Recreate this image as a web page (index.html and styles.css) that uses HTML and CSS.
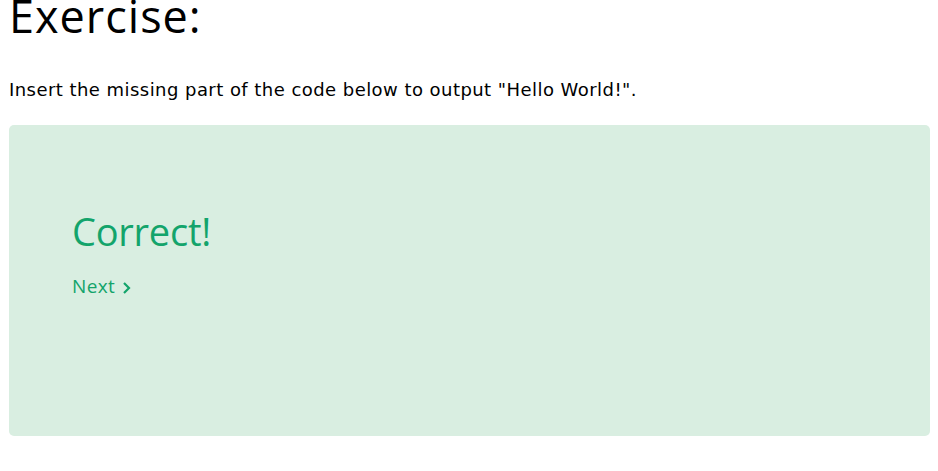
FILE: index.html
```html
<!DOCTYPE html>
<html lang="en">
<head>
<meta charset="utf-8">
<title>Exercise</title>
<link rel="stylesheet" href="styles.css">
</head>
<body>
<main class="page">
  <h2 class="title">Exercise:</h2>
  <p class="intro">Insert the missing part of the code below to output "Hello World!".</p>
  <section class="result">
    <h2 class="correct">Correct!</h2>
    <a class="next" href="#">Next<svg class="chev" width="9" height="12" viewBox="0 0 9 12" aria-hidden="true"><path d="M2 1 L7 6 L2 11" fill="none" stroke="currentColor" stroke-width="2.2"/></svg></a>
  </section>
</main>
</body>
</html>
```

FILE: styles.css
```css
html, body {
  margin: 0;
  padding: 0;
  background: #ffffff;
}
.page {
  padding: 0 8px 0 9px;
}
.title {
  margin: -4px 0 0 0;
  font-family: "Open Sans", "Noto Sans", sans-serif;
  font-weight: 400;
  font-size: 45px;
  line-height: 40px;
  height: 40px;
  color: #000;
  letter-spacing: 1px;
}
.intro {
  margin: 44px 0 0 0;
  font-family: "DejaVu Sans", Verdana, sans-serif;
  font-size: 18px;
  line-height: 20px;
  letter-spacing: 0.45px;
  color: #000;
}
.result {
  margin-top: 25px;
  height: 311px;
  box-sizing: border-box;
  background: #d9eee1;
  border-radius: 5px;
  padding: 83px 63px 0 63px;
  display: flex;
  flex-direction: column;
  align-items: flex-start;
}
.correct {
  margin: 0;
  font-family: "Open Sans", "Noto Sans", sans-serif;
  font-weight: 400;
  font-size: 38px;
  line-height: 46px;
  color: #13a46b;
  letter-spacing: -0.25px;
}
.next {
  margin-top: 20px;
  display: flex;
  align-items: center;
  gap: 7px;
  font-family: "Open Sans", "Noto Sans", sans-serif;
  font-size: 19px;
  line-height: 24px;
  letter-spacing: 0.4px;
  color: #13a46b;
  text-decoration: none;
}
.chev {
  display: block;
  margin-top: 3px;
}
```
